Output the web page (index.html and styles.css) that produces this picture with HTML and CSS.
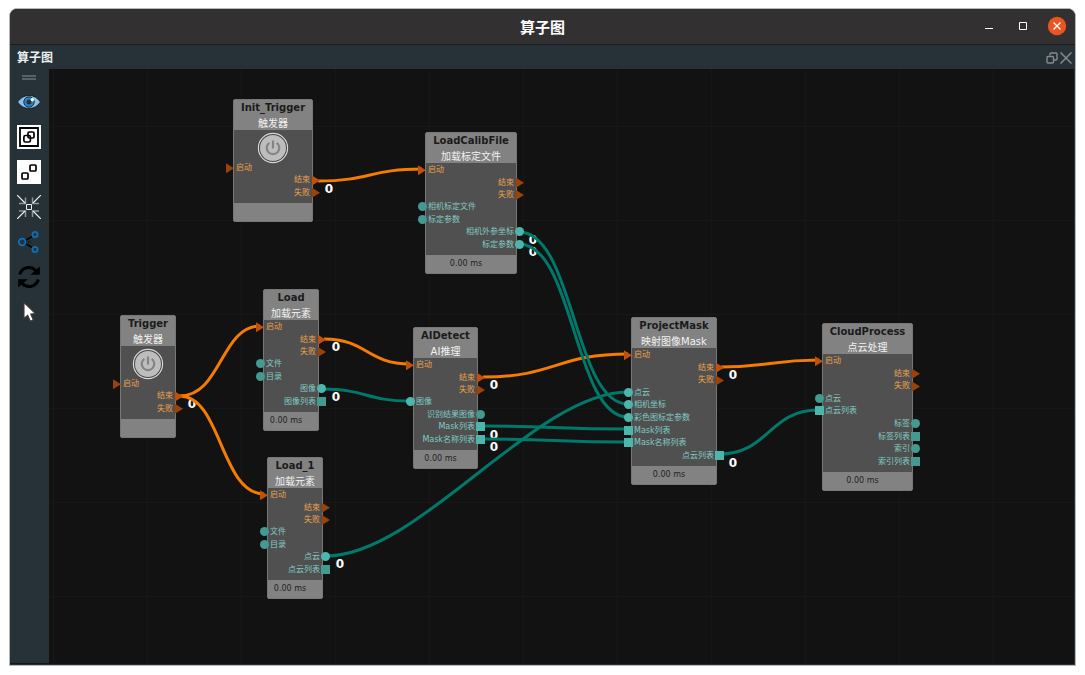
FILE: index.html
```html
<!DOCTYPE html>
<html lang="zh-CN">
<head>
<meta charset="utf-8">
<title>算子图</title>
<link rel="stylesheet" href="styles.css">
</head>
<body>
<svg class="defs" aria-hidden="true">
  <symbol id="power" viewBox="0 0 32 32">
    <circle cx="16" cy="16" r="15.500" fill="#474747"/>
    <circle cx="16" cy="16" r="14.600" fill="none" stroke="#d8d8d8" stroke-width="1.200"/>
    <circle cx="16" cy="16" r="13" fill="#bdbdbd"/>
    <path d="M12.300 10.800a6.300 6.300 0 1 0 7.400 0" fill="none" stroke="#848484" stroke-width="2.200"/>
    <path d="M16 8.500v8" stroke="#848484" stroke-width="2.200"/>
  </symbol>
</svg>
<main class="window">
  <header class="titlebar">
    <h1 class="titlebar-text">算子图</h1>
    <div class="window-controls">
      <button class="control" aria-label="最小化"><svg viewBox="0 0 20 20"><path d="M6 12.500h8" stroke="#fff"/></svg></button>
      <button class="control" aria-label="最大化"><svg viewBox="0 0 20 20"><path d="M6.500 6.500h7v7h-7z" fill="none" stroke="#fff"/></svg></button>
      <button class="control" aria-label="关闭"><svg viewBox="0 0 20 20"><circle cx="10" cy="10" r="9.200" fill="#e95420"/><path d="M6.500 6.500l7 7M13.500 6.500l-7 7" stroke="#fff" stroke-width="1.300"/></svg></button>
    </div>
  </header>
  <div class="dock-title">
    <h2 class="dock-name">算子图</h2>
    <div class="dock-controls">
      <button class="dock-button" aria-label="浮动"><svg viewBox="0 0 12 12"><path d="M4 3.500v-1.500q0-1 1-1h5q1 0 1 1v5q0 1-1 1h-2" fill="none" stroke="#868a8c" stroke-width="1.400"/><rect x="1" y="4.500" width="6.500" height="6.500" rx="1" fill="none" stroke="#868a8c" stroke-width="1.400"/></svg></button>
      <button class="dock-button" aria-label="关闭面板"><svg viewBox="0 0 12 12"><path d="M.5.5l11 11M11.500.5l-11 11" stroke="#868a8c" stroke-width="1.500"/></svg></button>
    </div>
  </div>
  <div class="workspace">
    <nav class="toolbar" aria-label="工具栏">
      <span class="grip"></span>
      <button class="tool" aria-label="显示"><svg viewBox="0 0 24 24"><path d="M.5 12Q5 5.500 12 5.500T23.500 12Q19 18.500 12 18.500T.5 12z" fill="#8cbfe8" stroke="#0c1419" stroke-width=".8"/><circle cx="12" cy="12" r="5.200" fill="#2e82c4" stroke="#143149" stroke-width="1"/><circle cx="12" cy="12" r="2.500" fill="#263238"/><circle cx="15.300" cy="9.700" r="1.700" fill="#fff"/></svg></button>
      <button class="tool" aria-label="组合"><svg viewBox="0 0 24 24"><path d="M0 0h24v24H0z" fill="#fff"/><path d="M3 3h18v18H3z" fill="none" stroke="#000" stroke-width="1.800"/><rect x="6.900" y="10.500" width="6.500" height="6.500" rx="1.500" fill="none" stroke="#000" stroke-width="1.700"/><rect x="11" y="7" width="6" height="6" rx="1.300" fill="none" stroke="#000" stroke-width="1.700"/></svg></button>
      <button class="tool" aria-label="拆分"><svg viewBox="0 0 24 24"><path d="M0 0h24v24H0z" fill="#fff"/><rect x="5" y="13" width="6" height="6" rx="1" fill="none" stroke="#000" stroke-width="1.700"/><rect x="13" y="5" width="6" height="6" rx="1" fill="none" stroke="#000" stroke-width="1.700"/></svg></button>
      <button class="tool" aria-label="居中"><svg viewBox="0 0 24 24" fill="none"><path d="M2 8.500h6.500V2.500M15.500 2.500v6h6.500M2 16h6.500v6M15.500 22v-6h6.500" stroke="#8f979b" stroke-width="1.500"/><path d="M0 0l8 8M24 0l-8 8M0 24l8-8M24 24l-8-8" stroke="#eef1f2" stroke-width="1.200"/><path d="M9.500 9.500h5v5h-5z" stroke="#eef1f2"/></svg></button>
      <button class="tool" aria-label="连接"><svg viewBox="0 0 24 24" fill="none"><path d="M8.500 10.300l7-4M8.500 13.700l7 4" stroke="#000" stroke-width="1.500"/><path d="M9 12h5" stroke="#000" stroke-dasharray="1 1"/><g stroke="#0b6fba" stroke-width="1.800"><circle cx="5.200" cy="12" r="3.400"/><circle cx="18" cy="4.500" r="2.600"/><circle cx="18" cy="19.500" r="2.600"/></g></svg></button>
      <button class="tool" aria-label="刷新"><svg viewBox="0 0 24 24"><path d="M2.700 9.500A9.500 9.500 0 0 1 19 5.800M21.300 14.500A9.500 9.500 0 0 1 5 18.200" fill="none" stroke="#000" stroke-width="3"/><path d="M22.800 1.500v8.200h-9.500zM1.200 22.500v-8.200h9.500z"/></svg></button>
      <button class="tool" aria-label="选择"><svg viewBox="0 0 24 24"><path d="M7 2.500v16l3.700-3.300 2.600 6 3-1.400-2.600-5.700 4.700-.5z" fill="#fff" stroke="#413b38" stroke-width="1.100" stroke-linejoin="round"/></svg></button>
    </nav>
    <section class="canvas" aria-label="算子图">
      <svg class="wires">
        <g class="counts">
          <text x="280" y="124">0</text><text x="484" y="175">0</text><text x="484" y="187">0</text>
          <text x="143" y="339">0</text><text x="287" y="282">0</text><text x="287" y="332">0</text>
          <text x="445" y="320">0</text><text x="445" y="370">0</text><text x="445" y="382">0</text>
          <text x="684" y="310">0</text><text x="684" y="398">0</text><text x="291" y="499">0</text>
        </g>
        <g class="flow">
          <path d="M269 112C321 112 321 100 373 100"/>
          <path d="M131 327C172 327 172 257 211 257"/>
          <path d="M131 327C172 327 172 425 215 425"/>
          <path d="M275 270C318 270 318 295 361 295"/>
          <path d="M434 308C507 308 507 285 579 285"/>
          <path d="M672 298C721 298 721 291 770 291"/>
        </g>
        <g class="data">
          <path d="M470 163C525 163 525 335 579 335"/>
          <path d="M470 175C525 175 525 348 579 348"/>
          <path d="M273 320C317 320 317 332 361 332"/>
          <path d="M432 357C505 357 505 360 579 360"/>
          <path d="M432 370C505 370 505 373 579 373"/>
          <path d="M277 487C370 487 486 323 579 323"/>
          <path d="M670 385C720 385 720 341 769 341"/>
        </g>
      </svg>

      <article class="node node-init">
        <h3 class="node-title">Init_Trigger</h3><p class="node-kind">触发器</p>
        <ul class="ports ports-trigger">
          <li class="port in exec">启动</li><li class="port out exec linked">结束</li><li class="port out exec">失败</li>
        </ul>
        <button class="power" aria-label="触发"><svg><use href="#power"/></svg></button>
        <footer class="node-time"></footer>
      </article>

      <article class="node node-calib">
        <h3 class="node-title">LoadCalibFile</h3><p class="node-kind">加载标定文件</p>
        <ul class="ports">
          <li class="port in exec linked">启动</li><li class="port out exec">结束</li><li class="port out exec">失败</li>
          <li class="port in item">相机标定文件</li><li class="port in item">标定参数</li>
          <li class="port out item linked">相机外参坐标</li><li class="port out item linked">标定参数</li>
        </ul>
        <footer class="node-time">0.00 ms</footer>
      </article>

      <article class="node node-trigger">
        <h3 class="node-title">Trigger</h3><p class="node-kind">触发器</p>
        <ul class="ports ports-trigger">
          <li class="port in exec">启动</li><li class="port out exec linked">结束</li><li class="port out exec">失败</li>
        </ul>
        <button class="power" aria-label="触发"><svg><use href="#power"/></svg></button>
        <footer class="node-time"></footer>
      </article>

      <article class="node node-load">
        <h3 class="node-title">Load</h3><p class="node-kind">加载元素</p>
        <ul class="ports">
          <li class="port in exec linked">启动</li><li class="port out exec linked">结束</li><li class="port out exec">失败</li>
          <li class="port in item">文件</li><li class="port in item">目录</li>
          <li class="port out item linked">图像</li><li class="port out list">图像列表</li>
        </ul>
        <footer class="node-time">0.00 ms</footer>
      </article>

      <article class="node node-load1">
        <h3 class="node-title">Load_1</h3><p class="node-kind">加载元素</p>
        <ul class="ports">
          <li class="port in exec linked">启动</li><li class="port out exec">结束</li><li class="port out exec">失败</li>
          <li class="port in item">文件</li><li class="port in item">目录</li>
          <li class="port out item linked">点云</li><li class="port out list">点云列表</li>
        </ul>
        <footer class="node-time">0.00 ms</footer>
      </article>

      <article class="node node-detect">
        <h3 class="node-title">AIDetect</h3><p class="node-kind">AI推理</p>
        <ul class="ports">
          <li class="port in exec linked">启动</li><li class="port out exec linked">结束</li><li class="port out exec">失败</li>
          <li class="port in item linked">图像</li><li class="port out item">识别结果图像</li>
          <li class="port out list linked">Mask列表</li><li class="port out list linked">Mask名称列表</li>
        </ul>
        <footer class="node-time">0.00 ms</footer>
      </article>

      <article class="node node-project">
        <h3 class="node-title">ProjectMask</h3><p class="node-kind">映射图像Mask</p>
        <ul class="ports ports-tall">
          <li class="port in exec linked">启动</li><li class="port out exec linked">结束</li><li class="port out exec">失败</li>
          <li class="port in item linked">点云</li><li class="port in item linked">相机坐标</li><li class="port in item linked">彩色图标定参数</li>
          <li class="port in list linked">Mask列表</li><li class="port in list linked">Mask名称列表</li><li class="port out list linked">点云列表</li>
        </ul>
        <footer class="node-time">0.00 ms</footer>
      </article>

      <article class="node node-cloud">
        <h3 class="node-title">CloudProcess</h3><p class="node-kind">点云处理</p>
        <ul class="ports ports-tall">
          <li class="port in exec linked">启动</li><li class="port out exec">结束</li><li class="port out exec">失败</li>
          <li class="port in item">点云</li><li class="port in list linked">点云列表</li><li class="port out item">标签</li>
          <li class="port out list">标签列表</li><li class="port out item">索引</li><li class="port out list">索引列表</li>
        </ul>
        <footer class="node-time">0.00 ms</footer>
      </article>
    </section>
  </div>
</main>
</body>
</html>
```
FILE: styles.css
```css
* { box-sizing: border-box; }

body {
  margin: 0;
  padding: 8px 9px 9px;
  height: 100vh;
  background: #fff;
  font-family: "DejaVu Sans", "Noto Sans CJK SC", sans-serif;
}

h1, h2, h3, p, ul { margin: 0; padding: 0; }
ul { list-style: none; }
button { padding: 0; border: 0; background: none; display: block; }
svg { display: block; }
.defs { position: absolute; width: 0; height: 0; }

.window {
  height: 100%;
  display: flex;
  flex-direction: column;
  border: 1px solid #b4b8ba;
  border-radius: 8px 8px 0 0;
  overflow: hidden;
  background: #263238;
}

.titlebar {
  display: grid;
  grid-template-columns: 1fr auto 1fr;
  align-items: center;
  height: 36px;
  background: #333031;
  border-bottom: 1px solid #1d1d1d;
}
.titlebar-text {
  grid-column: 2;
  padding-top: 2px;
  font-size: 15px;
  line-height: 20px;
  color: #fff;
}
.window-controls {
  display: flex;
  justify-content: flex-end;
  gap: 14px;
  padding: 0 8px 1px 0;
}
.control { width: 20px; height: 20px; }

.dock-title {
  display: flex;
  justify-content: space-between;
  align-items: center;
  height: 24px;
  padding: 1px 3px 0 7px;
}
.dock-name { font-size: 12px; line-height: 16px; color: #eceff1; }
.dock-controls { display: flex; gap: 2px; }
.dock-button { width: 12px; height: 12px; }

.workspace { flex: 1; display: flex; min-height: 0; padding: 0 1px 1px 0; }

.toolbar {
  width: 39px;
  display: flex;
  flex-direction: column;
  align-items: center;
  gap: 11px;
  padding: 6px 2px 0 0;
  border-bottom: 1px solid #111619;
}
.grip {
  width: 14px;
  height: 5px;
  margin-bottom: -1px;
  border: solid #596267;
  border-width: 2px 0;
}
.tool { width: 24px; height: 24px; }

.canvas {
  position: relative;
  flex: 1;
  overflow: hidden;
  background-color: #121212;
  background-image:
    linear-gradient(90deg, #171717 1px, transparent 1px),
    linear-gradient(#171717 1px, transparent 1px);
  background-size: 94px 94px;
  background-position: 4px 57px;
}

.wires { position: absolute; inset: 0; width: 100%; height: 100%; }
.wires path { fill: none; stroke-width: 3; }
.flow path { stroke: #f57c00; }
.data path { stroke: #00796b; }
.counts { fill: #fff; font-size: 12px; font-weight: bold; text-anchor: middle; }

.node {
  position: absolute;
  border: 1px solid #777;
  border-radius: 2px;
  background: #828282;
}
.node-title {
  text-align: center;
  font-size: 10px;
  line-height: 15px;
  color: #1b1b1b;
}
.node-kind {
  height: 15px;
  text-align: center;
  font-size: 10px;
  line-height: 17px;
  color: #f2f2f2;
}
.node-time {
  height: 18px;
  padding-right: 10px;
  text-align: center;
  font-size: 8px;
  line-height: 17px;
  color: #222;
}

.ports {
  display: grid;
  grid-auto-rows: 1fr;
  height: 92px;
  padding: 1px 0 4px;
  background: #505050;
}
.ports-tall { height: 118px; }
.ports-trigger { height: 73px; padding: 32px 0 4px; }

.port {
  position: relative;
  display: flex;
  align-items: center;
  padding: 0 2px;
  font-size: 8px;
  line-height: 12px;
  white-space: nowrap;
}
.port.out { justify-content: flex-end; }
.exec { color: #e8a04a; }
.item, .list { color: #80cbc4; }

.port::before {
  content: "";
  position: absolute;
  top: 50%;
  width: 9px;
  height: 9px;
  margin-top: -5px;
  background: #429a90;
}
.port.in::before { left: -8px; }
.port.out::before { right: -8px; }
.port.linked::before { background: #4db6ac; }
.port.item::before { border-radius: 50%; }
.port.exec::before { width: 8px; height: 10px; background: #9a4308; clip-path: polygon(0 0, 100% 50%, 0 100%); }
.port.exec.linked::before { background: #c2500a; }

.power {
  position: absolute;
  top: 32px;
  left: 50%;
  width: 32px;
  height: 32px;
  margin-left: -16px;
}
.power svg, .control svg, .dock-button svg, .tool svg { width: 100%; height: 100%; }

.node-init { left: 184px; top: 30px; width: 80px; }
.node-calib { left: 376px; top: 63px; width: 92px; }
.node-trigger { left: 71px; top: 246px; width: 56px; }
.node-load { left: 214px; top: 220px; width: 56px; }
.node-load1 { left: 218px; top: 388px; width: 56px; }
.node-detect { left: 364px; top: 258px; width: 65px; }
.node-project { left: 582px; top: 248px; width: 86px; }
.node-cloud { left: 773px; top: 254px; width: 91px; }
```
